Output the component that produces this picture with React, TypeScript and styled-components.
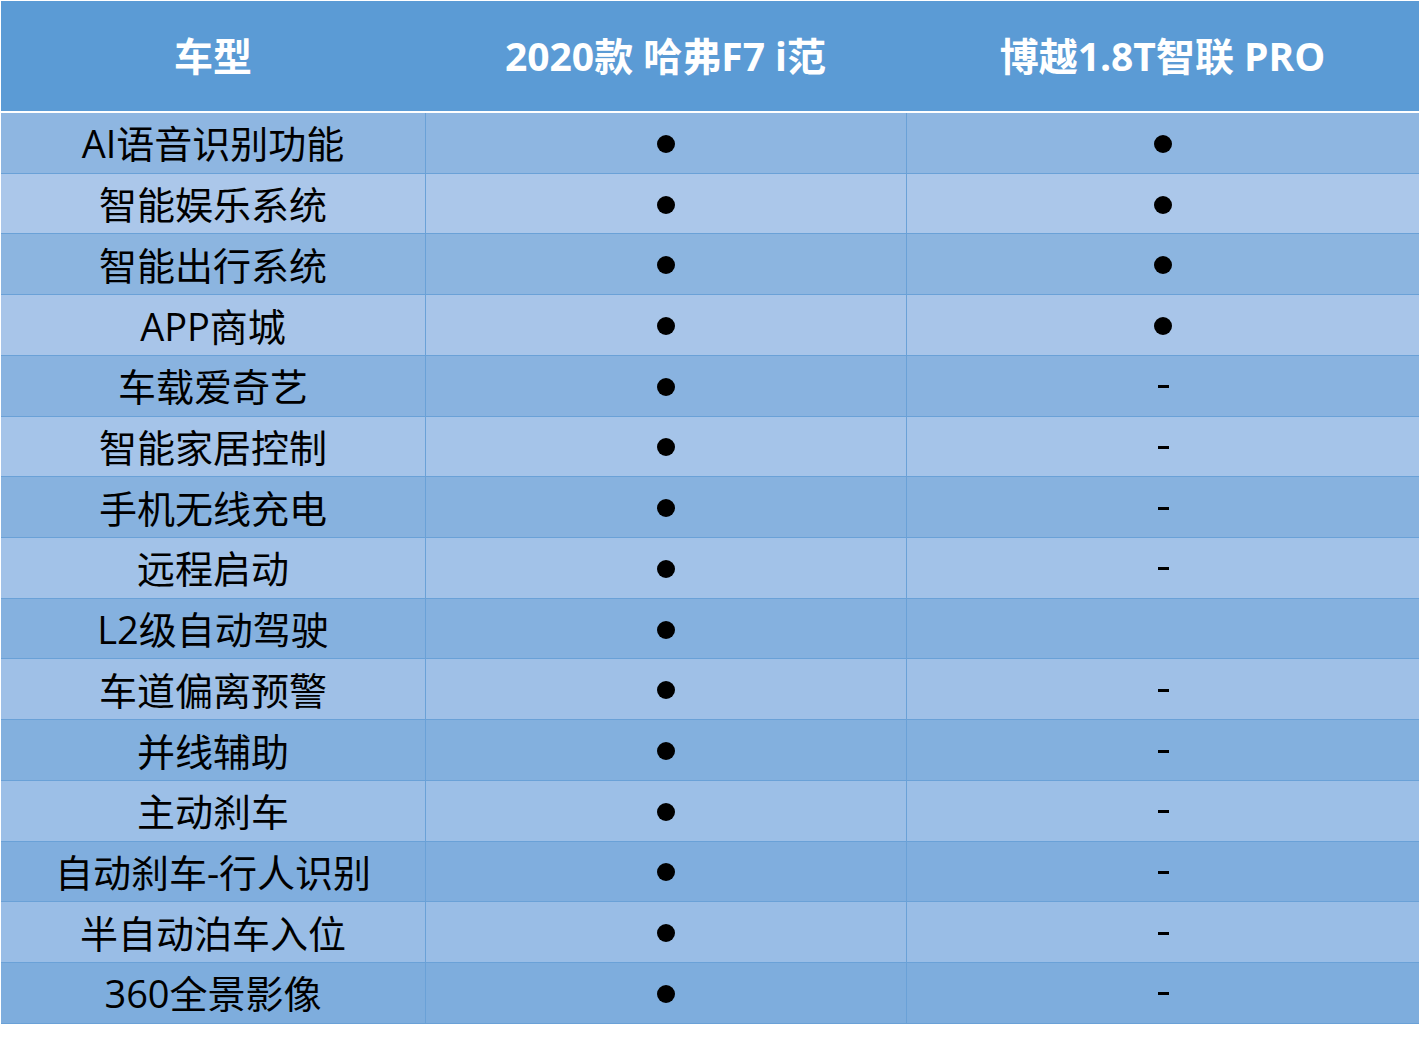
import styled, { createGlobalStyle } from "styled-components";

const GlobalStyle = createGlobalStyle`
  html, body {
    margin: 0;
    padding: 0;
    background: #ffffff;
  }
  body {
    font-family: "Open Sans", "Noto Sans CJK SC", sans-serif;
  }
`;

type Mark = "dot" | "dash" | "none";

interface Feature {
  name: string;
  f7: Mark;
  boyue: Mark;
}

const features: Feature[] = [
  { name: "AI语音识别功能", f7: "dot", boyue: "dot" },
  { name: "智能娱乐系统", f7: "dot", boyue: "dot" },
  { name: "智能出行系统", f7: "dot", boyue: "dot" },
  { name: "APP商城", f7: "dot", boyue: "dot" },
  { name: "车载爱奇艺", f7: "dot", boyue: "dash" },
  { name: "智能家居控制", f7: "dot", boyue: "dash" },
  { name: "手机无线充电", f7: "dot", boyue: "dash" },
  { name: "远程启动", f7: "dot", boyue: "dash" },
  { name: "L2级自动驾驶", f7: "dot", boyue: "none" },
  { name: "车道偏离预警", f7: "dot", boyue: "dash" },
  { name: "并线辅助", f7: "dot", boyue: "dash" },
  { name: "主动刹车", f7: "dot", boyue: "dash" },
  { name: "自动刹车-行人识别", f7: "dot", boyue: "dash" },
  { name: "半自动泊车入位", f7: "dot", boyue: "dash" },
  { name: "360全景影像", f7: "dot", boyue: "dash" },
];

// row tints drift slightly darker towards the bottom of the sheet
const oddStart = [142, 182, 225];
const oddEnd = [126, 173, 221];
const evenStart = [172, 200, 234];
const evenEnd = [152, 188, 230];

const mix = (a: number[], b: number[], t: number) =>
  `rgb(${a.map((v, i) => Math.round(v + (b[i] - v) * t)).join(",")})`;

const rowColor = (index: number) => {
  const t = index / (features.length - 1);
  return index % 2 === 0 ? mix(oddStart, oddEnd, t) : mix(evenStart, evenEnd, t);
};

const Page = styled.div`
  padding: 1px 0 0 1px;
  width: 1418px;
`;

const Sheet = styled.div`
  display: grid;
  grid-template-columns: 424px 481px 513px;
  width: 1418px;
`;

const HeaderCell = styled.div`
  height: 112px;
  box-sizing: border-box;
  background: #5b9bd5;
  color: #ffffff;
  font-weight: 700;
  font-size: 39px;
  display: flex;
  align-items: center;
  justify-content: center;
  padding-bottom: 5px;
  border-bottom: 2px solid #ffffff;
  white-space: nowrap;
`;

const Cell = styled.div<{ $first?: boolean }>`
  height: 60.73px;
  box-sizing: border-box;
  display: flex;
  align-items: center;
  justify-content: center;
  border-bottom: 1px solid #6aa1d7;
  border-left: ${(p) => (p.$first ? "none" : "1px solid #6aa1d7")};
  color: #000000;
  font-size: 38px;
  white-space: nowrap;
  padding-bottom: 2px;
`;

const Dot = styled.span`
  display: block;
  width: 18px;
  height: 18px;
  margin-top: 4px;
  border-radius: 50%;
  background: #000000;
`;

const Dash = styled.span`
  display: block;
  width: 11px;
  height: 3px;
  margin-top: 4px;
  background: #000000;
`;

const MarkCell = ({ mark, color }: { mark: Mark; color: string }) => (
  <Cell style={{ background: color }}>
    {mark === "dot" && <Dot />}
    {mark === "dash" && <Dash />}
  </Cell>
);

export default function App() {
  return (
    <>
      <GlobalStyle />
      <Page>
        <Sheet>
          <HeaderCell>车型</HeaderCell>
          <HeaderCell>2020款 哈弗F7 i范</HeaderCell>
          <HeaderCell>博越1.8T智联 PRO</HeaderCell>
          {features.map((f, i) => {
            const color = rowColor(i);
            return [
              <Cell key={`${f.name}-n`} $first style={{ background: color }}>
                {f.name}
              </Cell>,
              <MarkCell key={`${f.name}-a`} mark={f.f7} color={color} />,
              <MarkCell key={`${f.name}-b`} mark={f.boyue} color={color} />,
            ];
          })}
        </Sheet>
      </Page>
    </>
  );
}
